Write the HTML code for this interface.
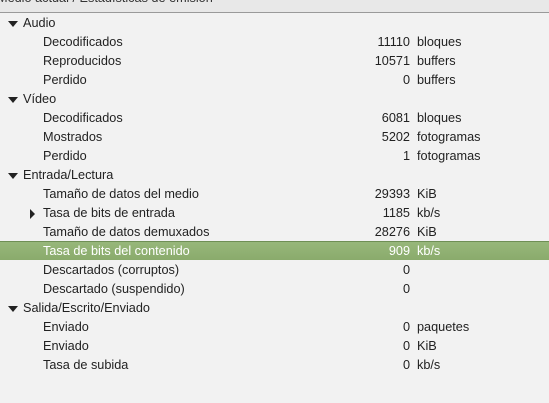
<!DOCTYPE html>
<html><head><meta charset="utf-8"><style>
body{margin:0;width:549px;height:403px;overflow:hidden;background:#f2f2f2;font-family:"Liberation Sans","DejaVu Sans",sans-serif;font-size:12.7px;color:#222;position:relative}
.hdr{position:absolute;left:0;top:0;width:549px;height:12px;background:#e8e8e8;border-bottom:1px solid #9a9a9a;overflow:hidden}
.hdr span{position:absolute;left:-3px;top:-9px;color:#333}
.r{position:absolute;left:0;width:549px;height:19px;line-height:19px}
.l{position:absolute;left:43px}
.p .l{left:23px}
.v{position:absolute;right:139px;text-align:right}
.u{position:absolute;left:417px}
.sel{background:linear-gradient(#97b77a,#8aab6c);border-top:1px solid #6f8f55;color:#fff;height:18px;line-height:18px}
.tri{position:absolute;left:8px;top:7px;width:0;height:0;border-left:5px solid transparent;border-right:5px solid transparent;border-top:6px solid #222}
.tr{position:absolute;left:30px;top:5px;width:0;height:0;border-top:5px solid transparent;border-bottom:5px solid transparent;border-left:5px solid #222}
</style></head><body>
<div class="hdr"><span>Medio actual / Estadísticas de emisión</span></div>
<div class="r p" style="top:14px"><div class="tri"></div><span class="l">Audio</span></div>
<div class="r" style="top:33px"><span class="l">Decodificados</span><span class="v">11110</span><span class="u">bloques</span></div>
<div class="r" style="top:52px"><span class="l">Reproducidos</span><span class="v">10571</span><span class="u">buffers</span></div>
<div class="r" style="top:71px"><span class="l">Perdido</span><span class="v">0</span><span class="u">buffers</span></div>
<div class="r p" style="top:90px"><div class="tri"></div><span class="l">Vídeo</span></div>
<div class="r" style="top:109px"><span class="l">Decodificados</span><span class="v">6081</span><span class="u">bloques</span></div>
<div class="r" style="top:128px"><span class="l">Mostrados</span><span class="v">5202</span><span class="u">fotogramas</span></div>
<div class="r" style="top:147px"><span class="l">Perdido</span><span class="v">1</span><span class="u">fotogramas</span></div>
<div class="r p" style="top:166px"><div class="tri"></div><span class="l">Entrada/Lectura</span></div>
<div class="r" style="top:185px"><span class="l">Tamaño de datos del medio</span><span class="v">29393</span><span class="u">KiB</span></div>
<div class="r" style="top:204px"><div class="tr"></div><span class="l">Tasa de bits de entrada</span><span class="v">1185</span><span class="u">kb/s</span></div>
<div class="r" style="top:223px"><span class="l">Tamaño de datos demuxados</span><span class="v">28276</span><span class="u">KiB</span></div>
<div class="r sel" style="top:241px"><span class="l">Tasa de bits del contenido</span><span class="v">909</span><span class="u">kb/s</span></div>
<div class="r" style="top:261px"><span class="l">Descartados (corruptos)</span><span class="v">0</span></div>
<div class="r" style="top:280px"><span class="l">Descartado (suspendido)</span><span class="v">0</span></div>
<div class="r p" style="top:299px"><div class="tri"></div><span class="l">Salida/Escrito/Enviado</span></div>
<div class="r" style="top:318px"><span class="l">Enviado</span><span class="v">0</span><span class="u">paquetes</span></div>
<div class="r" style="top:337px"><span class="l">Enviado</span><span class="v">0</span><span class="u">KiB</span></div>
<div class="r" style="top:356px"><span class="l">Tasa de subida</span><span class="v">0</span><span class="u">kb/s</span></div>
</body></html>
